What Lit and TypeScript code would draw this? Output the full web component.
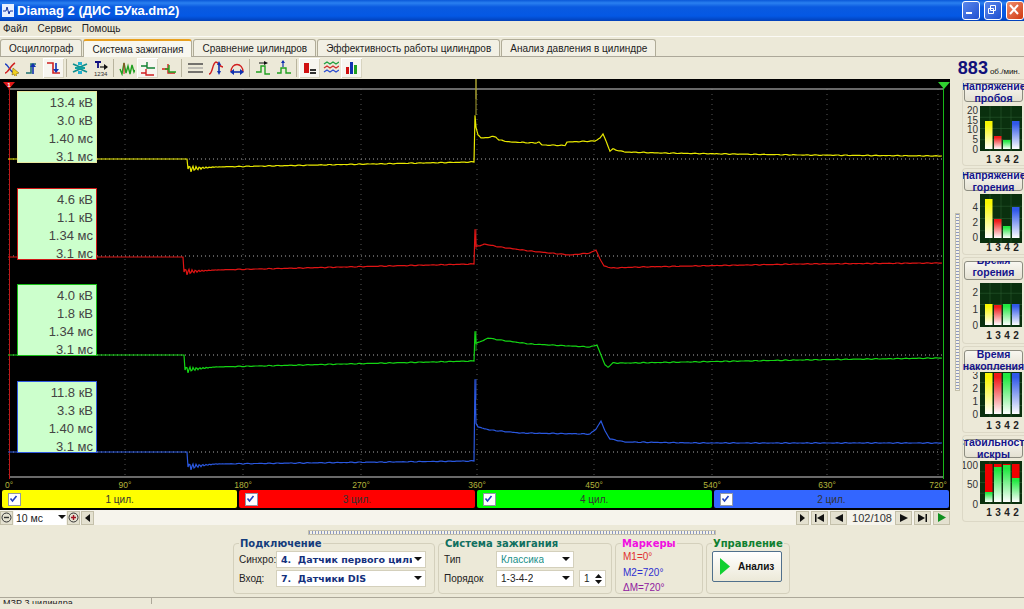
import { LitElement, html, css, svg } from 'lit';
import { customElement } from 'lit/decorators.js';

type Pt = [number, number];

const channels = [
  {
    color: '#e8e800', spike: '#a8a030', base: 158, tip: 78, dropX: 187,
    pts: [[8, 158], [187, 158], [188, 168], [215, 166], [474, 161], [475, 114], [476, 126], [478, 134], [481, 137], [488, 136.5], [492, 135.5], [496, 136], [499, 139], [510, 141], [536, 142], [539, 141], [542, 144], [565, 144.5], [567, 141], [595, 140], [600, 137], [603, 133], [606, 140], [610, 150], [613, 148], [616, 149], [625, 151], [660, 152], [800, 154], [942, 155]] as Pt[],
    label: ['13.4 кВ', '3.0 кВ', '1.40 мс', '3.1 мс'], border: '#e8e8a0', top: 12
  },
  {
    color: '#e01414', spike: '#a02020', base: 255, tip: 228, dropX: 183,
    pts: [[8, 256], [183, 256], [184, 271], [215, 269], [474, 263], [475, 228], [476, 245], [480, 245], [484, 243], [500, 246], [530, 250], [570, 254], [590, 252], [596, 249], [600, 258], [604, 265], [612, 267], [640, 266], [800, 263], [942, 262]] as Pt[],
    label: ['4.6 кВ', '1.1 кВ', '1.34 мс', '3.1 мс'], border: '#d01818', top: 109
  },
  {
    color: '#14d414', spike: '#20a020', base: 354, tip: 330, dropX: 184,
    pts: [[8, 354], [184, 354], [185, 369], [215, 366], [474, 360], [475, 330], [476, 342], [480, 341], [488, 337], [500, 339], [530, 343], [590, 346], [597, 344], [601, 354], [605, 364], [608, 366], [613, 362], [630, 362], [800, 359], [942, 357]] as Pt[],
    label: ['4.0 кВ', '1.8 кВ', '1.34 мс', '3.1 мс'], border: '#18c018', top: 205
  },
  {
    color: '#2a58e0', spike: '#2a48b0', base: 451, tip: 378, dropX: 187,
    pts: [[8, 451], [187, 451], [188, 466], [215, 463], [474, 460], [475, 378], [476, 422], [478, 426], [490, 429], [520, 432], [590, 433], [596, 428], [601, 420], [605, 430], [610, 438], [625, 441], [700, 442], [942, 442]] as Pt[],
    label: ['11.8 кВ', '3.3 кВ', '1.40 мс', '3.1 мс'], border: '#3058e0', top: 302
  }
];

// builds a slightly noisy trace with ringing after the first drop
function trace(pts: Pt[], dropX: number) {
  const out: string[] = [];
  for (let i = 0; i < pts.length - 1; i++) {
    const [x0, y0] = pts[i];
    const [x1, y1] = pts[i + 1];
    const steps = Math.max(1, Math.round(x1 - x0));
    for (let s = 0; s < steps; s++) {
      const x = x0 + ((x1 - x0) * s) / steps;
      let y = y0 + ((y1 - y0) * s) / steps;
      const t = x - dropX;
      if (t > 1 && t < 40) y += 5 * Math.exp(-t / 9) * Math.sin(t * 1.9);
      else if (x > 215) y += 0.35 * Math.sin(x * 0.73) * Math.sin(x * 0.11);
      out.push(`${x.toFixed(1)},${(y - 78).toFixed(1)}`);
    }
  }
  const last = pts[pts.length - 1];
  out.push(`${last[0]},${last[1] - 78}`);
  return out.join(' ');
}

const degrees = [[9, '0°'], [125, '90°'], [243, '180°'], [361, '270°'], [477, '360°'], [594, '450°'], [712, '540°'], [827, '630°'], [938, '720°']] as [number, string][];

const gradientStops = [['gy', '#f8f800'], ['gr', '#f01818'], ['gg', '#20e840'], ['gb', '#3058e8']];

const panels = [
  {
    lines: ['Напряжение', 'пробоя'], shift: -3, top: 78, plot: [104, 149], cat: 158,
    ticks: [['20', 108], ['15', 118], ['10', 127], ['5', 137], ['0', 147]],
    base: 147, bars: [119, 134, 138, 119]
  },
  {
    lines: ['Напряжение', 'горения'], shift: -3, top: 168, plot: [193, 242], cat: 247,
    ticks: [['4', 206], ['2', 221], ['0', 236]],
    base: 237, bars: [198, 218, 225, 206]
  },
  {
    lines: ['Время', 'горения'], shift: -7, top: 258, plot: [282, 327], cat: 336,
    ticks: [['2', 292], ['1', 309], ['0', 325]],
    base: 325, bars: [304, 305, 304, 304]
  },
  {
    lines: ['Время', 'накопления'], shift: -2, top: 347, plot: [371, 417], cat: 426,
    ticks: [['3', 375], ['2', 388], ['1', 401], ['0', 414]],
    base: 414, bars: [373, 373, 373, 373]
  },
  {
    lines: ['Стабильность', 'искры'], shift: -3, top: 436, plot: [461, 504], cat: 513,
    ticks: [['100', 465], ['50', 484], ['0', 504]],
    base: 502, bars: [492, 467, 465, 478], stacked: 464
  }
];

const barX = [22, 31, 40, 49];
const barFill = ['gy', 'gr', 'gg', 'gb'];
const catLabels = ['1', '3', '4', '2'];

const tabs = ['Осциллограф', 'Система зажигания', 'Сравнение цилиндров', 'Эффективность работы цилиндров', 'Анализ давления в цилиндре'];

const line = (d: string, c: string, w = 1.4) => svg`<path d=${d} fill="none" stroke=${c} stroke-width=${w}/>`;

// toolbar groups, null = separator, the flag marks a pressed button
const toolbar: ([ReturnType<typeof svg>, boolean?] | null)[] = [
  [svg`${line('M1 4c3 0 5 8 9 9', '#2040c0')}${line('M1 13c3 0 6-8 10-10', '#d02020')}<path d="M9 8l6 5-3 1 1 3-2 0-1-3-2 1z" fill="#f0d020" stroke="#705000" stroke-width=".5"/>`],
  [svg`${line('M1 13h5V4h5', '#207070', 1.6)}${line('M8 14V6', '#1030b0', 1.6)}<path d="M5 7l3-4 3 4z" fill="#1030b0"/>`],
  [svg`${line('M1 3h6v10h7', '#d02020', 1.6)}${line('M10 3v8', '#1030b0', 1.6)}<path d="M7 9l3 4 3-4z" fill="#1030b0"/>`, true],
  null,
  [svg`${line('M1 4l7 3 7-3M1 12l7-3 7 3', '#109090', 1.8)}${line('M3 8h10', '#10a0a0', 2)}<path d="M6 2h4v3H6zM6 11h4v3H6z" fill="#20b0d0"/>`],
  [svg`${line('M2 2h6M5 2v6', '#101080', 1.8)}${line('M7 7h7', '#101010', 1.2)}<path d="M11 4l4 3-4 3z" fill="#101010"/><text x="1" y="15.5" font-size="6" font-family="Liberation Sans" fill="#303030">1234</text>`],
  null,
  [svg`${line('M1 9l2 5 2-11 2 10 2-7 2 8 2-9 2 7 1-2', '#20a020')}${line('M5 3v11', '#d02020', 1)}`],
  [svg`${line('M1 6h6V2v6h8', '#108030')}${line('M1 13h5V9v6h8', '#d02020')}`, true],
  [svg`${line('M1 9h6V4v9h7', '#d02020')}${line('M4 9h4V5v7h7', '#20a020')}`],
  null,
  [svg`${line('M1 4h15', '#404040', 1.4)}${line('M1 8h15', '#909090', 1)}${line('M1 12h15', '#404040', 1.4)}`],
  [svg`${line('M1 14c4 0 3-11 7-12 3 0 3 5 7 5', '#d02020')}${line('M11 3v10', '#1030b0', 1.6)}<path d="M9 5l2-4 2 4zM9 11l2 4 2-4z" fill="#1030b0"/>`],
  [svg`${line('M2 12C2 2 14 2 14 12', '#d02020')}${line('M3 12h10', '#1030b0', 1.6)}<path d="M5 9l-4 3 4 3zM11 9l4 3-4 3z" fill="#1030b0"/>`],
  null,
  [svg`${line('M1 12h5V6h4v8h5', '#20a020')}${line('M4 3h6', '#101010', 1)}<path d="M9 1l4 2-4 2z" fill="#101010"/>`],
  [svg`${line('M1 13h4V8h5v5h5', '#20a020')}${line('M7 1v6', '#1030b0', 1.2)}<path d="M5 3l2-3 2 3z" fill="#1030b0"/>`],
  null,
  [svg`<path d="M2 3h5v10H2z" fill="#d01010"/><path d="M8 9h6v2H8zM8 12h6v2H8z" fill="#303030"/>`, true],
  [svg`${line('M1 4l3-2 3 2 3-2 3 2 3-2', '#20a040')}${line('M1 8l3-2 3 2 3-2 3 2 3-2', '#d03030')}${line('M1 12l3-2 3 2 3-2 3 2 3-2', '#3050d0')}`],
  [svg`<path d="M2 7h3v7H2z" fill="#d01010"/><path d="M6 2h3v12H6z" fill="#1030b0"/><path d="M10 5h3v9h-3z" fill="#20a020"/>`, true]
];

@customElement('app-root')
export class AppRoot extends LitElement {
  static styles = css`
    :host {
      display: block;
      width: 1024px;
      height: 609px;
      overflow: hidden;
      background: #ece9d8;
      font-family: 'Liberation Sans', sans-serif;
      font-size: 10px;
      color: #222;
    }

    .title {
      height: 21px;
      display: flex;
      align-items: center;
      gap: 3px;
      padding-left: 2px;
      background: linear-gradient(180deg, #0a58d8 0, #2a80f0 3px, #0a5ae0 7px, #0458e4 16px, #0240b8 21px);
      color: #fff;
      font: bold 13px 'Liberation Sans', sans-serif;
    }
    .title .name { flex: 1; }
    .winbtn {
      width: 16px;
      height: 17px;
      margin-right: 1px;
      border: 1px solid #fff;
      border-radius: 3px;
      background: linear-gradient(135deg, #5a88ec, #2050d0);
      display: flex;
    }
    .winbtn.close { background: linear-gradient(135deg, #f09070, #d03810); margin-right: 0; }

    .menu {
      height: 15px;
      display: flex;
      align-items: center;
      gap: 10px;
      padding-left: 3px;
      border-bottom: 1px solid #fbfaf5;
    }

    .tabs {
      height: 18px;
      margin-top: 1px;
      display: flex;
      align-items: flex-end;
      gap: 1px;
      border-bottom: 1px solid #aca899;
      box-sizing: content-box;
    }
    .tab {
      height: 16px;
      padding: 0 8px;
      display: flex;
      align-items: center;
      border: 1px solid #b0ac98;
      border-bottom: none;
      border-radius: 3px 3px 0 0;
      background: #f2f0e4;
      white-space: nowrap;
    }
    .tab.on {
      height: 18px;
      background: #f8f7ef;
      border-top: 2px solid #e8a020;
      box-sizing: border-box;
      margin-bottom: -1px;
    }

    .tools {
      height: 22px;
      display: flex;
      align-items: center;
      padding-left: 1px;
    }
    .tool {
      width: 21px;
      height: 20px;
      display: flex;
      align-items: center;
      justify-content: center;
    }
    .tool.on { background: #f7f6f0; box-shadow: inset 1px 1px 0 #fff, inset -1px -1px 0 #d8d4c0; }
    .tool svg { width: 16px; height: 16px; }
    .sep { width: 1px; height: 18px; margin: 0 2px; background: #b8b49e; }
    .rpm {
      margin-left: auto;
      display: flex;
      align-items: baseline;
      gap: 2px;
      color: #111;
      font-size: 8px;
      padding-right: 4px;
    }
    .rpm b { font-size: 18px; color: #10107a; }

    .main { display: flex; height: 446px; }
    .left { width: 950px; display: flex; flex-direction: column; }
    .plot { position: relative; width: 950px; height: 410px; background: #000; }
    .plot > svg { display: block; }
    .info {
      position: absolute;
      left: 17px;
      width: 80px;
      height: 72px;
      box-sizing: border-box;
      padding: 2px 3px 0 0;
      border: 1px solid;
      background: #ccffcc;
      color: #444;
      font-size: 13px;
      line-height: 18px;
      text-align: right;
    }

    .strip {
      height: 21px;
      display: grid;
      grid-template-columns: repeat(4, 1fr);
      gap: 2px;
      padding: 1px 1px 2px 2px;
      box-sizing: border-box;
      background: #000;
    }
    .cyl {
      display: flex;
      align-items: center;
      justify-content: center;
      position: relative;
      border-radius: 2px;
      color: #333;
    }
    .check {
      position: absolute;
      left: 6px;
      top: 3px;
      width: 11px;
      height: 11px;
      background: #fff;
      border: 1px solid #9098a8;
      display: flex;
    }

    .ctrl {
      height: 15px;
      display: flex;
      align-items: center;
      background: #f6f4ec;
      font-size: 10.5px;
    }
    .mini {
      width: 13px;
      height: 14px;
      border: 1px solid #c4c0aa;
      box-sizing: border-box;
      background: #e4e1d0;
      display: flex;
      align-items: center;
      justify-content: center;
    }
    .mini.nav { width: 17px; margin-right: 2px; }
    .zoomsel {
      width: 50px;
      height: 14px;
      margin: 0 1px;
      padding-left: 2px;
      display: flex;
      align-items: center;
      justify-content: space-between;
      background: #fff;
    }
    .track { flex: 1; }
    .count { width: 46px; text-align: center; color: #333; font-size: 11px; }

    .split {
      width: 12px;
      display: flex;
      justify-content: center;
      align-items: flex-start;
      padding-top: 134px;
    }
    .split i {
      display: block;
      width: 5px;
      height: 178px;
      margin-left: 3px;
      border: 1px solid #c4c0aa;
      box-sizing: border-box;
      background: repeating-linear-gradient(180deg, #8c98c0 0 1px, #f4f2e8 1px 3px);
    }

    .side { width: 62px; display: flex; flex-direction: column; gap: 2px; }
    .panel {
      height: 87px;
      box-sizing: border-box;
      padding-top: 3px;
      border: 1px solid #dcd8c6;
      border-right: none;
      border-radius: 4px 0 0 4px;
    }
    .head {
      position: relative;
      height: 22px;
      overflow: hidden;
    }
    .head::before {
      content: '';
      position: absolute;
      left: 1px;
      right: 1px;
      top: 0;
      height: 19px;
      box-sizing: border-box;
      border: 1px solid #8c8c80;
      border-radius: 3px;
      background: linear-gradient(180deg, #f8f7f0, #e4e1d2);
    }
    .head div {
      position: relative;
      display: flex;
      justify-content: center;
      color: #14148c;
      font: bold 10.5px/12px 'Liberation Sans', sans-serif;
      white-space: nowrap;
    }
    .panel svg { display: block; }

    .bottom { height: 79px; display: flex; flex-direction: column; }
    .hsplit {
      width: 408px;
      height: 5px;
      margin: 5px 0 0 308px;
      border: 1px solid #c4c0aa;
      box-sizing: border-box;
      background: repeating-linear-gradient(90deg, #8c98c0 0 1px, #f4f2e8 1px 3px);
    }
    .groups { display: flex; gap: 3px; margin: 3px 0 0 233px; }
    fieldset {
      height: 56px;
      margin: 0;
      padding: 0 5px;
      box-sizing: border-box;
      border: 1px solid #d4d0bc;
      border-radius: 4px;
    }
    legend {
      padding: 0 1px;
      font: bold 10px 'DejaVu Sans', sans-serif;
      line-height: 11px;
    }
    .rows {
      display: grid;
      row-gap: 2px;
      align-items: center;
      margin-top: 2px;
    }
    .conn { width: 202px; }
    .conn .rows { grid-template-columns: 37px 150px; }
    .ign { width: 170px; }
    .ign .rows { grid-template-columns: 52px 78px 5px 27px; }
    .sel {
      height: 17px;
      box-sizing: border-box;
      padding: 0 3px 0 4px;
      display: flex;
      align-items: center;
      justify-content: space-between;
      background: #fff;
      border: 1px solid #d4d0bc;
      overflow: hidden;
    }
    .sel span { overflow: hidden; white-space: nowrap; }
    .sel.strong {
      color: #14307c;
      font: bold 9.5px 'DejaVu Sans', sans-serif;
    }
    .sel.teal { color: #209088; }
    .spin { grid-column: 4; }
    .arrow { flex: none; margin-left: 2px; }
    .marks { width: 88px; }
    .marks div { font-size: 10px; line-height: 15.5px; padding-left: 2px; }
    .ctlg { width: 84px; }
    .run {
      width: 70px;
      height: 31px;
      margin-top: 2px;
      box-sizing: border-box;
      display: flex;
      align-items: center;
      gap: 8px;
      padding-left: 7px;
      border: 1px solid #50708c;
      border-radius: 2px;
      background: linear-gradient(180deg, #fff, #ece9d8);
      font: bold 10px 'Liberation Sans', sans-serif;
      color: #111;
    }

    .status {
      height: 6px;
      margin-top: 3px;
      display: flex;
      border-top: 1px solid #aca899;
      font-size: 9px;
      line-height: 10px;
      overflow: hidden;
    }
    .status span { width: 148px; padding-left: 3px; border-right: 1px solid #aca899; }
  `;

  private plotSvg() {
    return html`<svg width="950" height="410">
      ${degrees.map(([x]) => svg`<line x1=${x} x2=${x} y1="10" y2="398" stroke="#555" stroke-dasharray="1 4"/>`)}
      <line x1="9" x2="943" y1="10" y2="10" stroke="#8c8c8c" stroke-width="1.4"/>
      <line x1="9" x2="943" y1="398" y2="398" stroke="#8c8c8c" stroke-width="1.4"/>
      ${channels.map(c => svg`<line x1="9" x2="943" y1=${c.base - 78} y2=${c.base - 78} stroke="#aaa" stroke-dasharray="1 3"/>`)}
      <line x1="9.5" x2="9.5" y1="4" y2="400" stroke="#c01818"/>
      <line x1="943.5" x2="943.5" y1="4" y2="400" stroke="#18b818"/>
      <path d="M3 3h12l-6 7z" fill="#e01818"/>
      <path d="M938 3h12l-6 7z" fill="#30d030"/>
      <text x="9" y="8" font-size="6" font-weight="bold" fill="#fff" text-anchor="middle">1</text>
      <line x1="476" x2="476" y1="0" y2="36" stroke="#a8a030"/>
      ${channels.map(c => svg`
        <line x1="476" x2="476" y1=${c.tip - 78} y2=${c.tip - 58} stroke=${c.spike}/>
        <polyline points=${trace(c.pts, c.dropX)} fill="none" stroke=${c.color} stroke-width="1.2"/>`)}
      ${degrees.map(([x, t]) => svg`<text x=${x} y="409" font-size="8.5" fill="#b4b43c" font-family="Liberation Sans" text-anchor="middle">${t}</text>`)}
    </svg>`;
  }

  private arrow() {
    return html`<svg class="arrow" width="8" height="5"><path d="M0 0h8L4 4z" fill="#111"/></svg>`;
  }

  private sideChart(p: typeof panels[number]) {
    const top = p.top + 25;
    const [y0, y1] = p.plot.map(v => v - top);
    const grid = [0.25, 0.5, 0.75].map(f => y0 + (y1 - y0) * f);
    return html`<svg width="61" height="60">
      <defs>
        ${gradientStops.map(([id, col]) => svg`<linearGradient id=${id} x1="0" y1="0" x2="0" y2="1">
          <stop offset="0.1" stop-color=${col}/><stop offset="1" stop-color="#fff"/></linearGradient>`)}
      </defs>
      <rect x="17" y=${y0} width="42" height=${y1 - y0} fill="#0a300e"/>
      ${grid.map(y => svg`<line x1="17" x2="59" y1=${y} y2=${y} stroke="#2a5a30" stroke-width=".6"/>`)}
      ${[27, 38, 48].map(x => svg`<line x1=${x} x2=${x} y1=${y0} y2=${y1} stroke="#2a5a30" stroke-width=".6"/>`)}
      ${p.ticks.map(([t, y]) => svg`<text x="15" y=${(y as number) - top + 3.5} font-size="10" fill="#333" text-anchor="end" font-family="Liberation Sans">${t}</text>`)}
      ${p.bars.map((b, i) => svg`
        ${p.stacked ? svg`<rect x=${barX[i]} y=${p.stacked - top} width="7.5" height=${b - p.stacked} fill="#f00000"/>` : ''}
        <rect x=${barX[i]} y=${b - top} width="7.5" height=${p.base - b} fill=${p.stacked ? 'url(#gg)' : `url(#${barFill[i]})`}/>
        <text x=${barX[i] + 4} y=${p.cat - top + 3} font-size="10" font-weight="bold" fill="#222" text-anchor="middle" font-family="Liberation Sans">${catLabels[i]}</text>`)}
    </svg>`;
  }

  render() {
    return html`
      <div class="title">
        <svg width="12" height="13"><rect width="12" height="13" fill="#e8f0ff"/><path d="M1 7h3l1-4 2 7 1-3h3" fill="none" stroke="#1030a0"/></svg>
        <span class="name">Diamag 2 (ДИС БУка.dm2)</span>
        <div class="winbtn"><svg width="14" height="15"><rect x="3" y="10" width="6" height="2" fill="#fff"/></svg></div>
        <div class="winbtn"><svg width="14" height="15"><path d="M5.5 3.5h5v5h-5zM3.5 6.5h5v5h-5z" fill="none" stroke="#fff"/></svg></div>
        <div class="winbtn close"><svg width="14" height="15"><path d="M3 3l8 9M11 3l-8 9" stroke="#fff" stroke-width="2"/></svg></div>
      </div>

      <div class="menu"><span>Файл</span><span>Сервис</span><span>Помощь</span></div>

      <div class="tabs">
        ${tabs.map((t, i) => html`<div class="tab ${i === 1 ? 'on' : ''}">${t}</div>`)}
      </div>

      <div class="tools">
        ${toolbar.map(t => t
          ? html`<div class="tool ${t[1] ? 'on' : ''}"><svg viewBox="0 0 16 16">${t[0]}</svg></div>`
          : html`<div class="sep"></div>`)}
        <div class="rpm"><b>883</b> об./мин.</div>
      </div>

      <div class="main">
        <div class="left">
          <div class="plot">
            ${this.plotSvg()}
            ${channels.map(c => html`<div class="info" style="top:${c.top}px;border-color:${c.border}">
              ${c.label.map(l => html`<div>${l}</div>`)}
            </div>`)}
          </div>

          <div class="strip">
            ${[['#ffff00', '1 цил.'], ['#ff0000', '3 цил.'], ['#00ff00', '4 цил.'], ['#3366ff', '2 цил.']].map(([col, name]) => html`
              <div class="cyl" style="background:${col}">
                <span class="check"><svg width="9" height="9"><path d="M1.5 4.5l2 2.5 4-5" fill="none" stroke="#2040c0" stroke-width="1.6"/></svg></span>
                ${name}
              </div>`)}
          </div>

          <div class="ctrl">
            <div class="mini"><svg width="11" height="11"><circle cx="5.5" cy="5.5" r="4.5" fill="none" stroke="#333"/><path d="M3 5.5h5" stroke="#333" stroke-width="1.4"/></svg></div>
            <div class="zoomsel">10 мс ${this.arrow()}</div>
            <div class="mini"><svg width="11" height="11"><circle cx="5.5" cy="5.5" r="4.5" fill="none" stroke="#333"/><path d="M3 5.5h5M5.5 3v5" stroke="#a01020" stroke-width="1.4"/></svg></div>
            <div class="mini" style="margin-left:1px"><svg width="5" height="8"><path d="M5 0v8L0 4z" fill="#111"/></svg></div>
            <div class="track"></div>
            <div class="mini" style="margin-right:2px"><svg width="5" height="8"><path d="M0 0v8l5-4z" fill="#111"/></svg></div>
            <div class="mini nav"><svg width="9" height="8"><path d="M0 0h1.5v8H0zM9 0v8L2 4z" fill="#111"/></svg></div>
            <div class="mini nav"><svg width="8" height="8"><path d="M8 0v8L0 4z" fill="#111"/></svg></div>
            <div class="count">102/108</div>
            <div class="mini nav"><svg width="8" height="8"><path d="M0 0v8l8-4z" fill="#111"/></svg></div>
            <div class="mini nav"><svg width="9" height="8"><path d="M0 0v8l7-4zM7.5 0H9v8H7.5z" fill="#111"/></svg></div>
            <div class="mini nav" style="margin-right:0"><svg width="8" height="9"><path d="M0 0v9l8-4.500z" fill="#109020"/></svg></div>
          </div>
        </div>

        <div class="split"><i></i></div>

        <div class="side">
          ${panels.map(p => html`<div class="panel">
            <div class="head">
              <div style="margin-top:${p.shift}px">${p.lines[0]}</div>
              <div>${p.lines[1]}</div>
            </div>
            ${this.sideChart(p)}
          </div>`)}
        </div>
      </div>

      <div class="bottom">
        <div class="hsplit"></div>
        <div class="groups">
          <fieldset class="conn">
            <legend style="color:#143c7c">Подключение</legend>
            <div class="rows">
              <span>Синхро:</span>
              <div class="sel strong"><span>4.&nbsp; Датчик первого цилинд</span>${this.arrow()}</div>
              <span>Вход:</span>
              <div class="sel strong"><span>7.&nbsp; Датчики DIS</span>${this.arrow()}</div>
            </div>
          </fieldset>
          <fieldset class="ign">
            <legend style="color:#107060">Система зажигания</legend>
            <div class="rows">
              <span>Тип</span>
              <div class="sel teal"><span>Классика</span>${this.arrow()}</div>
              <i></i><i></i>
              <span>Порядок</span>
              <div class="sel"><span>1-3-4-2</span>${this.arrow()}</div>
              <i></i>
              <div class="sel spin"><span>1</span><svg width="7" height="12"><path d="M0 5l3.500-4L7 5zM0 7l3.500 4L7 7z" fill="#111"/></svg></div>
            </div>
          </fieldset>
          <fieldset class="marks">
            <legend style="color:#f010e0">Маркеры</legend>
            <div style="color:#e03030">M1=0°</div>
            <div style="color:#3030d0">M2=720°</div>
            <div style="color:#9020a0">ΔM=720°</div>
          </fieldset>
          <fieldset class="ctlg">
            <legend style="color:#108030">Управление</legend>
            <div class="run"><svg width="10" height="17"><path d="M0 0v17l10-8.500z" fill="#10d030"/></svg>Анализ</div>
          </fieldset>
        </div>
        <div class="status"><span>МЗР 3 цилиндра</span></div>
      </div>
    `;
  }
}
